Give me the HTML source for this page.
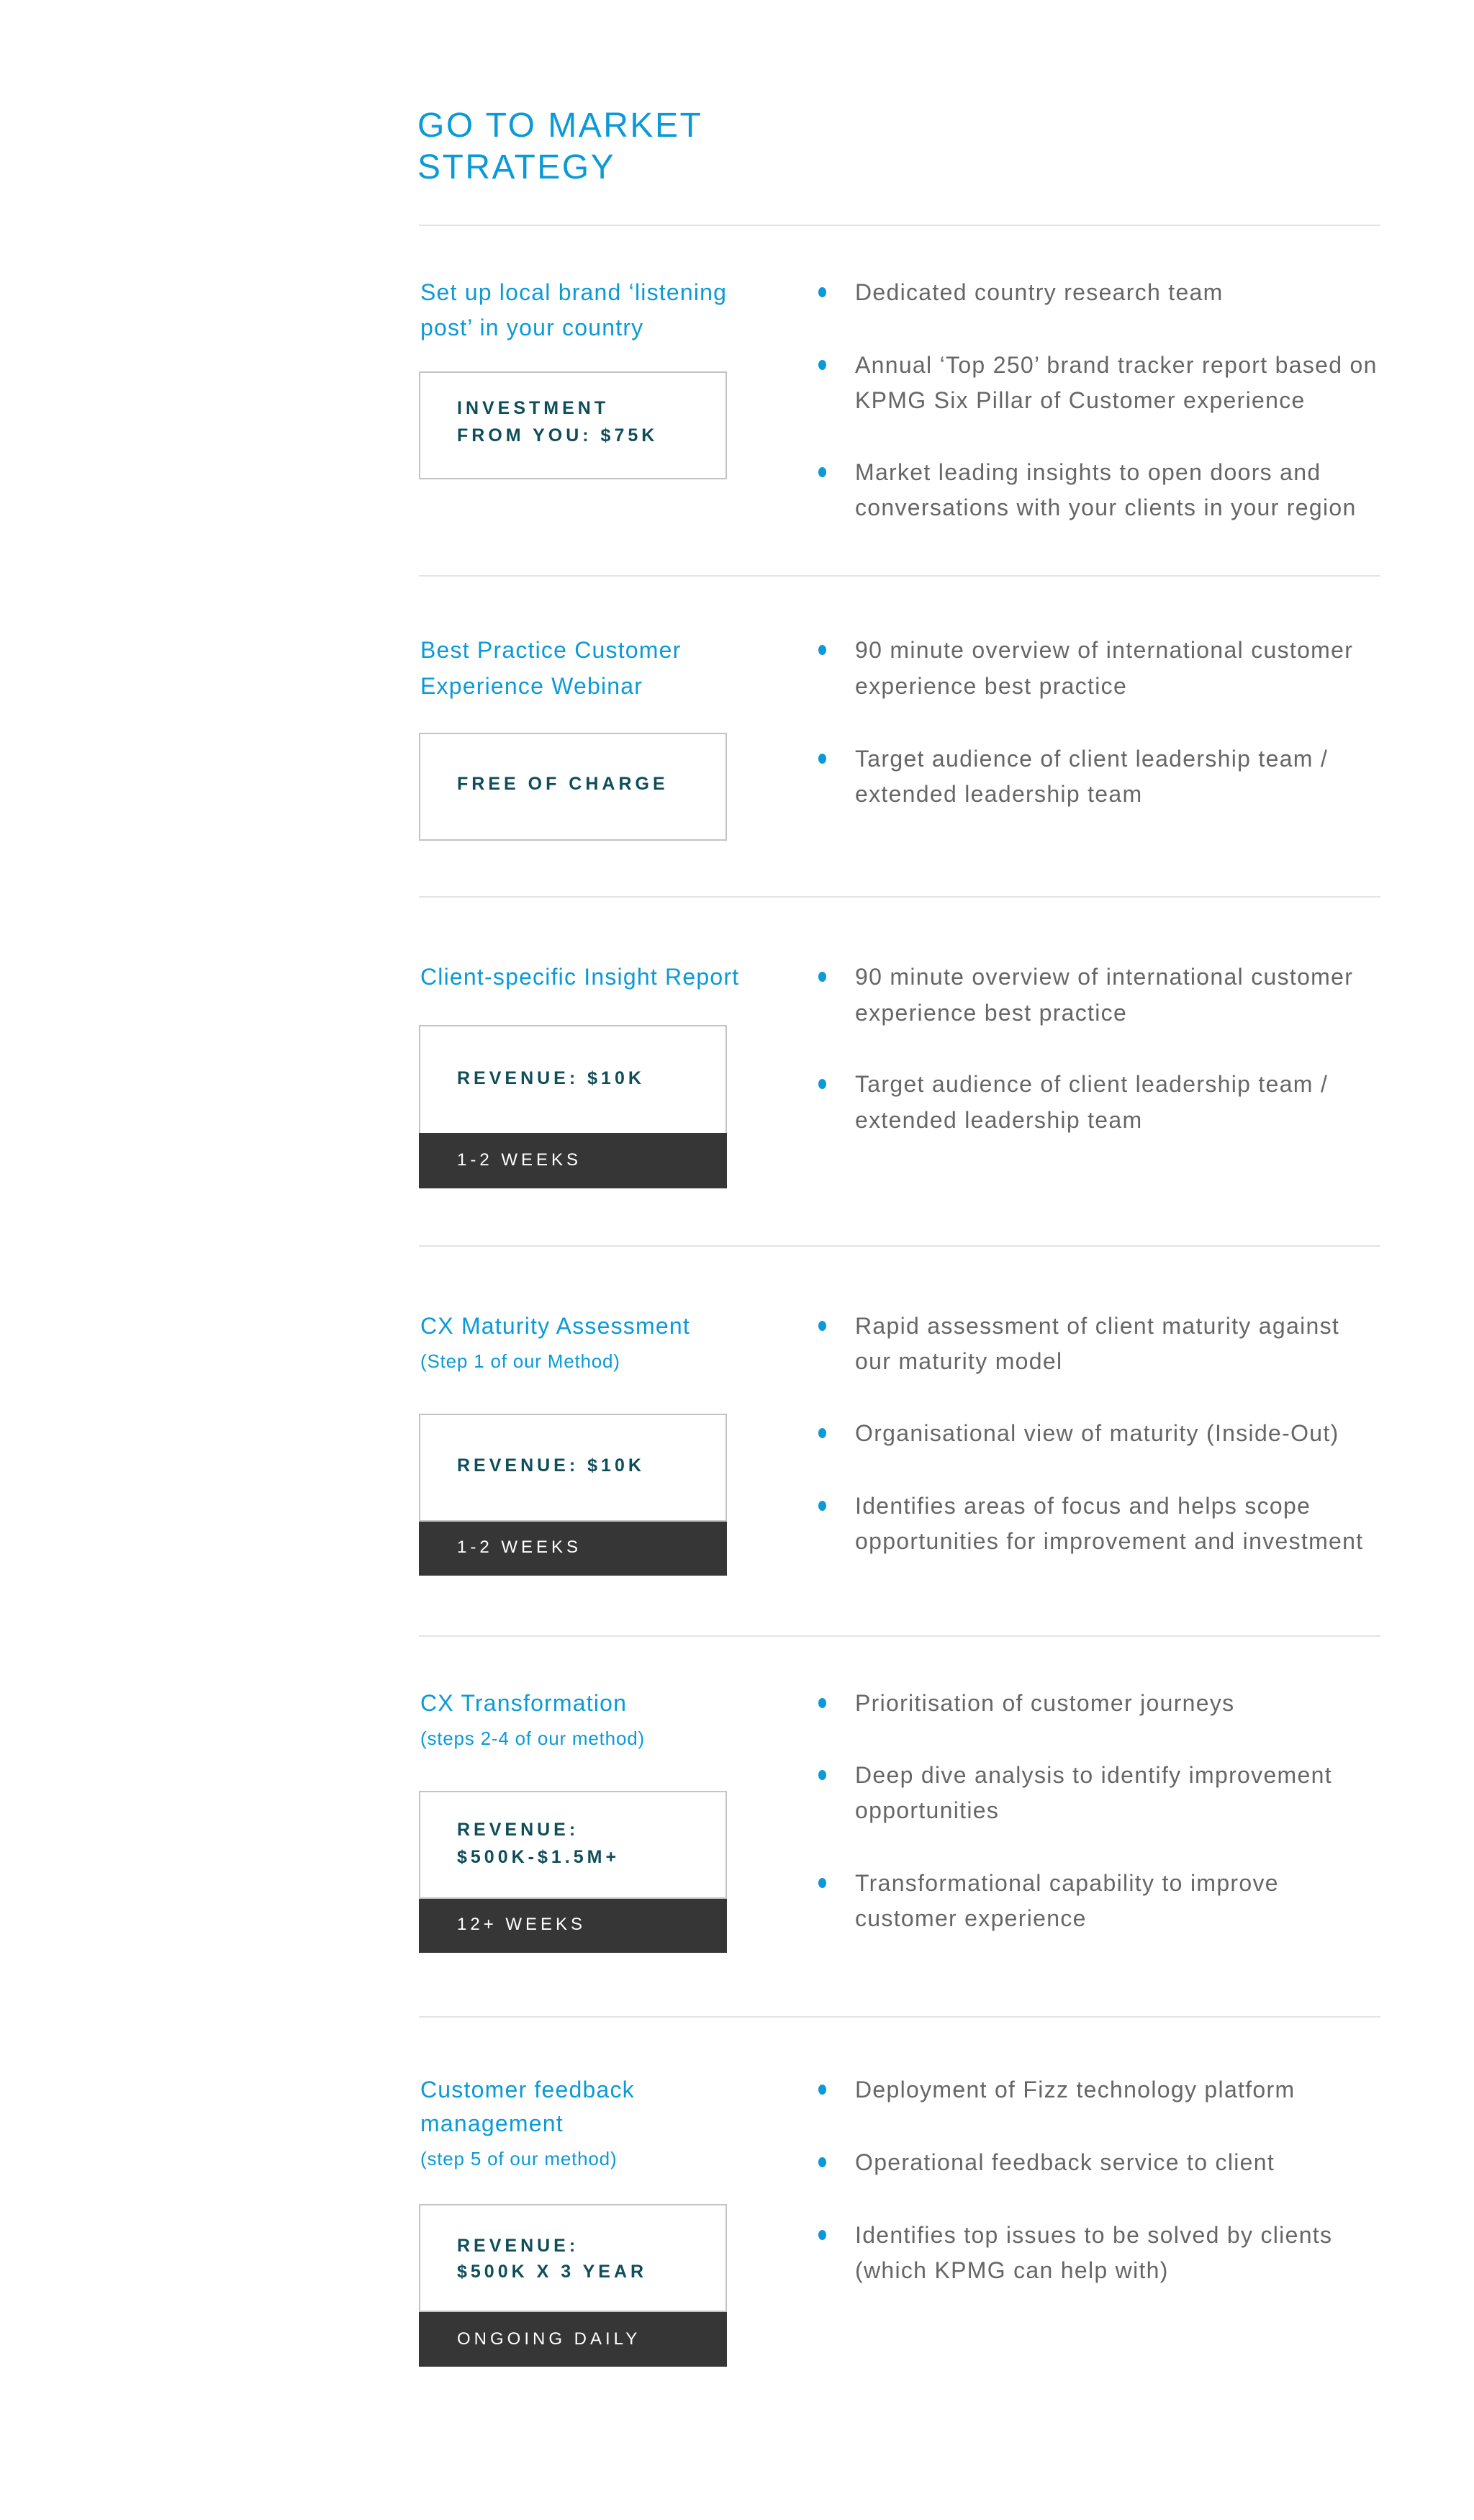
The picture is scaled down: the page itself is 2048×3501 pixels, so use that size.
<!DOCTYPE html>
<html><head><meta charset="utf-8"><style>
html,body{margin:0;padding:0;background:#fff;}
body{width:2048px;height:3501px;position:relative;overflow:hidden;font-family:"Liberation Sans",sans-serif;}
.t{position:absolute;white-space:nowrap;line-height:48px;height:48px;}
.h{color:#0a9ad8;font-size:48px;letter-spacing:2.5px;left:580px;line-height:58px;}
.bl{color:#0a9ad8;font-size:32px;left:584px;letter-spacing:1.2px;}
.sub{color:#0a9ad8;font-size:26px;left:584px;letter-spacing:0.8px;}
.g{color:#666;font-size:32px;left:1188px;letter-spacing:1.3px;}
.dot{position:absolute;left:1137px;width:11px;height:14px;border-radius:50%;background:#0a9ad8;}
.hr{position:absolute;left:582px;width:1336px;height:2px;background:#e4e4e4;}
.box{position:absolute;left:582px;width:424px;border:2px solid #c4c4c4;background:#fff;}
.dark{position:absolute;left:582px;width:428px;background:#363636;}
.bt{position:absolute;left:635px;color:#0e4d5a;font-size:25px;font-weight:bold;letter-spacing:5px;line-height:38px;white-space:nowrap;}
.wt{position:absolute;left:635px;color:#fff;font-size:24px;letter-spacing:5px;line-height:38px;white-space:nowrap;}
</style></head><body>
<div class="t h" style="top:146px">GO TO MARKET</div>
<div class="t h" style="top:204px">STRATEGY</div>
<div class="hr" style="top:312px"></div>

<!-- S1 -->
<div class="t bl" style="top:382px">Set up local brand ‘listening</div>
<div class="t bl" style="top:431px">post’ in your country</div>
<div class="box" style="top:516px;height:146px"></div>
<div class="bt" style="top:548px">INVESTMENT</div>
<div class="bt" style="top:586px">FROM YOU: $75K</div>
<div class="dot" style="top:399px"></div><div class="t g" style="top:382px">Dedicated country research team</div>
<div class="dot" style="top:500px"></div><div class="t g" style="top:483px">Annual ‘Top 250’ brand tracker report based on</div>
<div class="t g" style="top:532px">KPMG Six Pillar of Customer experience</div>
<div class="dot" style="top:649px"></div><div class="t g" style="top:632px">Market leading insights to open doors and</div>
<div class="t g" style="top:681px">conversations with your clients in your region</div>
<div class="hr" style="top:799px"></div>

<!-- S2 -->
<div class="t bl" style="top:879px">Best Practice Customer</div>
<div class="t bl" style="top:929px">Experience Webinar</div>
<div class="box" style="top:1018px;height:146px"></div>
<div class="dot" style="top:896px"></div><div class="t g" style="top:879px">90 minute overview of international customer</div>
<div class="bt" style="top:1070px">FREE OF CHARGE</div>
<div class="t g" style="top:929px">experience best practice</div>
<div class="dot" style="top:1047px"></div><div class="t g" style="top:1030px">Target audience of client leadership team /</div>
<div class="t g" style="top:1079px">extended leadership team</div>
<div class="hr" style="top:1245px"></div>

<!-- S3 -->
<div class="t bl" style="top:1333px">Client-specific Insight Report</div>
<div class="box" style="top:1424px;height:150px"></div>
<div class="dark" style="top:1574px;height:77px"></div>
<div class="bt" style="top:1479px">REVENUE: $10K</div>
<div class="wt" style="top:1593px">1-2 WEEKS</div>
<div class="dot" style="top:1350px"></div><div class="t g" style="top:1333px">90 minute overview of international customer</div>
<div class="t g" style="top:1383px">experience best practice</div>
<div class="dot" style="top:1499px"></div><div class="t g" style="top:1482px">Target audience of client leadership team /</div>
<div class="t g" style="top:1532px">extended leadership team</div>
<div class="hr" style="top:1730px"></div>

<!-- S4 -->
<div class="t bl" style="top:1818px">CX Maturity Assessment</div>
<div class="t sub" style="top:1867px">(Step 1 of our Method)</div>
<div class="box" style="top:1964px;height:146px"></div>
<div class="dark" style="top:2114px;height:75px"></div>
<div class="bt" style="top:2017px">REVENUE: $10K</div>
<div class="wt" style="top:2131px">1-2 WEEKS</div>
<div class="dot" style="top:1835px"></div><div class="t g" style="top:1818px">Rapid assessment of client maturity against</div>
<div class="t g" style="top:1867px">our maturity model</div>
<div class="dot" style="top:1984px"></div><div class="t g" style="top:1967px">Organisational view of maturity (Inside-Out)</div>
<div class="dot" style="top:2085px"></div><div class="t g" style="top:2068px">Identifies areas of focus and helps scope</div>
<div class="t g" style="top:2117px">opportunities for improvement and investment</div>
<div class="hr" style="top:2272px"></div>

<!-- S5 -->
<div class="t bl" style="top:2342px">CX Transformation</div>
<div class="t sub" style="top:2391px">(steps 2-4 of our method)</div>
<div class="box" style="top:2488px;height:146px"></div>
<div class="dark" style="top:2638px;height:75px"></div>
<div class="bt" style="top:2523px">REVENUE:</div>
<div class="bt" style="top:2561px">$500K-$1.5M+</div>
<div class="wt" style="top:2655px">12+ WEEKS</div>
<div class="dot" style="top:2359px"></div><div class="t g" style="top:2342px">Prioritisation of customer journeys</div>
<div class="dot" style="top:2459px"></div><div class="t g" style="top:2442px">Deep dive analysis to identify improvement</div>
<div class="t g" style="top:2491px">opportunities</div>
<div class="dot" style="top:2609px"></div><div class="t g" style="top:2592px">Transformational capability to improve</div>
<div class="t g" style="top:2641px">customer experience</div>
<div class="hr" style="top:2801px"></div>

<!-- S6 -->
<div class="t bl" style="top:2879px">Customer feedback</div>
<div class="t bl" style="top:2926px">management</div>
<div class="t sub" style="top:2975px">(step 5 of our method)</div>
<div class="box" style="top:3062px;height:146px"></div>
<div class="dark" style="top:3212px;height:76px"></div>
<div class="bt" style="top:3101px">REVENUE:</div>
<div class="bt" style="top:3137px">$500K X 3 YEAR</div>
<div class="wt" style="top:3231px">ONGOING DAILY</div>
<div class="dot" style="top:2896px"></div><div class="t g" style="top:2879px">Deployment of Fizz technology platform</div>
<div class="dot" style="top:2997px"></div><div class="t g" style="top:2980px">Operational feedback service to client</div>
<div class="dot" style="top:3098px"></div><div class="t g" style="top:3081px">Identifies top issues to be solved by clients</div>
<div class="t g" style="top:3130px">(which KPMG can help with)</div>
</body></html>
